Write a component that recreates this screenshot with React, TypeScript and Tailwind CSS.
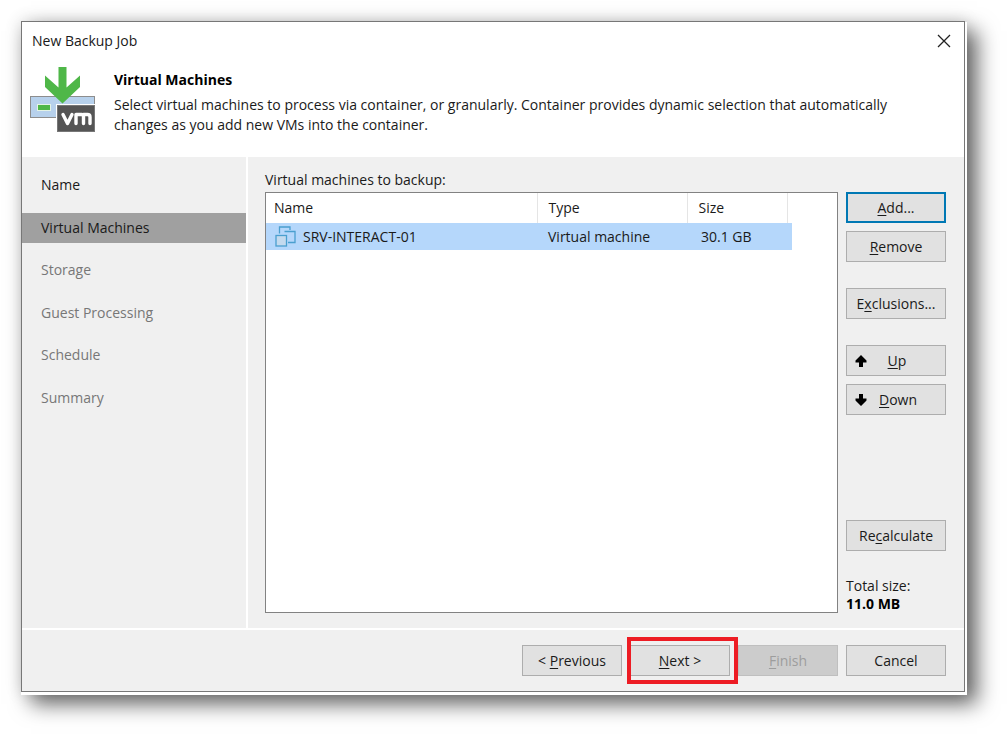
import { useState } from 'react'
import type { ReactNode } from 'react'

const steps = ['Name', 'Virtual Machines', 'Storage', 'Guest Processing', 'Schedule', 'Summary']

const machines = [{ name: 'SRV-INTERACT-01', type: 'Virtual machine', size: '30.1 GB' }]

function JobLogo() {
  return (
    <svg width="66" height="66" viewBox="0 0 66 66" className="shrink-0" aria-hidden="true">
      <rect x="0.5" y="29.5" width="64" height="21" fill="#b7d1ec" stroke="#8d8d8d" />
      <rect x="7" y="37" width="14" height="7" fill="#e4f3e6" />
      <rect x="8" y="38" width="12" height="5" fill="#4fb748" />
      <path d="M28.500 0h8v20.500l13.500-12v11.500L32.500 36.500L15 20V8.500l13.500 12z" fill="#4fb748" />
      <rect x="26" y="37" width="40" height="29" fill="#fff" />
      <rect x="27.500" y="38.500" width="37" height="26" fill="#555" stroke="#777" />
      <g fill="none" stroke="#fff" strokeWidth="3.400" strokeLinecap="round" strokeLinejoin="round">
        <path d="M33 47.500l4.500 9l4.500-9" />
        <path d="M46 56.500v-9h5.500q2 0 2 2v7M53.500 47.500h4q2.500 0 2.500 2.500v6.500" />
      </g>
    </svg>
  )
}

function VmIcon() {
  return (
    <svg width="21" height="21" viewBox="0 0 21 21" fill="none" stroke="#4a9fcf" className="shrink-0" aria-hidden="true">
      <path d="M4.500 7.500V1h10.500V4" strokeWidth="1.300" />
      <path d="M9.500 5.500h10.500v11h-7" strokeWidth="1.300" />
      <rect x="1" y="9.500" width="10.500" height="10.500" fill="#c4daee" strokeWidth="1.300" />
    </svg>
  )
}

function ArrowIcon({ down }: { down?: boolean }) {
  return (
    <svg width="12" height="12" viewBox="0 0 12 12" className={down ? 'rotate-180' : ''} aria-hidden="true">
      <path d="M6 0l5.500 5.500v2H8V12H4V7.500H.5v-2z" fill="#000" />
    </svg>
  )
}

function Button({ children, className = 'border-[#adadad]', disabled }: { children: ReactNode; className?: string; disabled?: boolean }) {
  return (
    <button
      type="button"
      disabled={disabled}
      className={`h-[31px] w-[100px] shrink-0 border bg-[#e1e1e1] whitespace-nowrap underline-offset-2 hover:bg-[#e5f1fb] disabled:border-[#bfbfbf] disabled:bg-[#cccccc] disabled:text-[#9d9d9d] ${className}`}
    >
      {children}
    </button>
  )
}

export default function App() {
  const [active, setActive] = useState(1)

  return (
    <div className="flex min-h-screen bg-white pt-[21px] pr-[43px] pb-[45px] pl-[21px] font-['Open_Sans','Noto_Sans',sans-serif] text-sm leading-5 text-[#1a1a1a]">
      <div className="flex min-w-0 flex-1 flex-col border border-[#777] bg-[#f0f0f0] shadow-[1px_2px_0_1px_#fff,11px_11px_20px_1px_rgba(0,0,0,0.6),0_0_16px_rgba(0,0,0,0.15)]">
        <header className="h-[135px] bg-white">
          <div className="flex items-center justify-between pt-[9px] pr-3 pl-[10px]">
            <h1>New Backup Job</h1>
            <button type="button" aria-label="Close" className="p-px">
              <svg width="14" height="14" viewBox="0 0 14 14" stroke="#222" strokeWidth="1.300" aria-hidden="true">
                <path d="M1 1l12 12M13 1L1 13" />
              </svg>
            </button>
          </div>
          <div className="flex gap-[18px] pt-4 pl-2">
            <JobLogo />
            <div className="pt-[3px]">
              <h2 className="mb-[5px] font-bold text-black">Virtual Machines</h2>
              <p className="max-w-[810px]">
                Select virtual machines to process via container, or granularly. Container provides dynamic selection that automatically changes as you add new VMs into the container.
              </p>
            </div>
          </div>
        </header>

        <div className="flex flex-1">
          <nav className="w-[226px] shrink-0 border-r-2 border-white pt-[13px]">
            <ul className="flex h-[243px] flex-col justify-between">
              {steps.map((step, i) => (
                <li key={step}>
                  <button
                    type="button"
                    onClick={() => setActive(i)}
                    className={`block h-[30px] w-full pl-[19px] text-left ${i === active ? 'bg-[#a0a0a0]' : ''} ${i > active ? 'text-[#777]' : ''}`}
                  >
                    {step}
                  </button>
                </li>
              ))}
            </ul>
          </nav>

          <main className="flex min-w-0 flex-1 gap-2 pr-[18px] pl-[17px]">
            <section className="flex min-w-0 flex-1 flex-col pt-[13px] pb-[15px]">
              <h3 id="vm-label" className="mb-0.5">Virtual machines to backup:</h3>
              <div className="flex-1 border border-[#828282] bg-white">
                <table aria-labelledby="vm-label" className="w-[526px] table-fixed border-collapse text-left">
                  <colgroup>
                    <col className="w-[271px]" />
                    <col className="w-[150px]" />
                    <col className="w-[100px]" />
                    <col />
                  </colgroup>
                  <thead>
                    <tr className="h-[30px]">
                      <th className="border-r border-[#e5e5e5] pl-2 font-normal">Name</th>
                      <th className="border-r border-[#e5e5e5] pl-[11px] font-normal">Type</th>
                      <th className="border-r border-[#e5e5e5] pl-[11px] font-normal">Size</th>
                      <th />
                    </tr>
                  </thead>
                  <tbody>
                    {machines.map((vm) => (
                      <tr key={vm.name} className="h-[27px] bg-[#b5d7fb]">
                        <td className="pl-[9px]">
                          <div className="flex items-center gap-[7px]">
                            <VmIcon />
                            {vm.name}
                          </div>
                        </td>
                        <td className="pl-[11px]">{vm.type}</td>
                        <td className="pl-[14px]">{vm.size}</td>
                        <td />
                      </tr>
                    ))}
                  </tbody>
                </table>
              </div>
            </section>

            <aside className="flex w-[100px] shrink-0 flex-col pt-[35px] pb-[15px]">
              <Button className="border-2 border-[#0078b4]"><u>A</u>dd...</Button>
              <div className="mt-2 mb-[26px] flex">
                <Button><u>R</u>emove</Button>
              </div>
              <Button>E<u>x</u>clusions...</Button>
              <div className="mt-[26px] flex flex-col gap-2">
                <Button>
                  <span className="grid grid-cols-[32px_1fr_30px] items-center">
                    <span className="pl-2"><ArrowIcon /></span>
                    <span><u>U</u>p</span>
                  </span>
                </Button>
                <Button>
                  <span className="grid grid-cols-[32px_1fr_30px] items-center">
                    <span className="pl-2"><ArrowIcon down /></span>
                    <span><u>D</u>own</span>
                  </span>
                </Button>
              </div>
              <div className="mt-auto">
                <Button>Re<u>c</u>alculate</Button>
                <p className="mt-[26px] leading-[18px]">Total size:</p>
                <p className="leading-[18px] font-bold text-black">11.0 MB</p>
              </div>
            </aside>
          </main>
        </div>

        <footer className="flex justify-end gap-2 border-t-2 border-white pt-[15px] pr-[18px] pb-[15px]">
          <Button>&lt; <u>P</u>revious</Button>
          <div className="relative">
            <Button><u>N</u>ext &gt;</Button>
            <div className="pointer-events-none absolute -top-2 -bottom-2 -left-[3px] z-10 w-[111px] border-4 border-[#ed1c24]" />
          </div>
          <Button disabled><u>F</u>inish</Button>
          <Button>Cancel</Button>
        </footer>
      </div>
    </div>
  )
}
